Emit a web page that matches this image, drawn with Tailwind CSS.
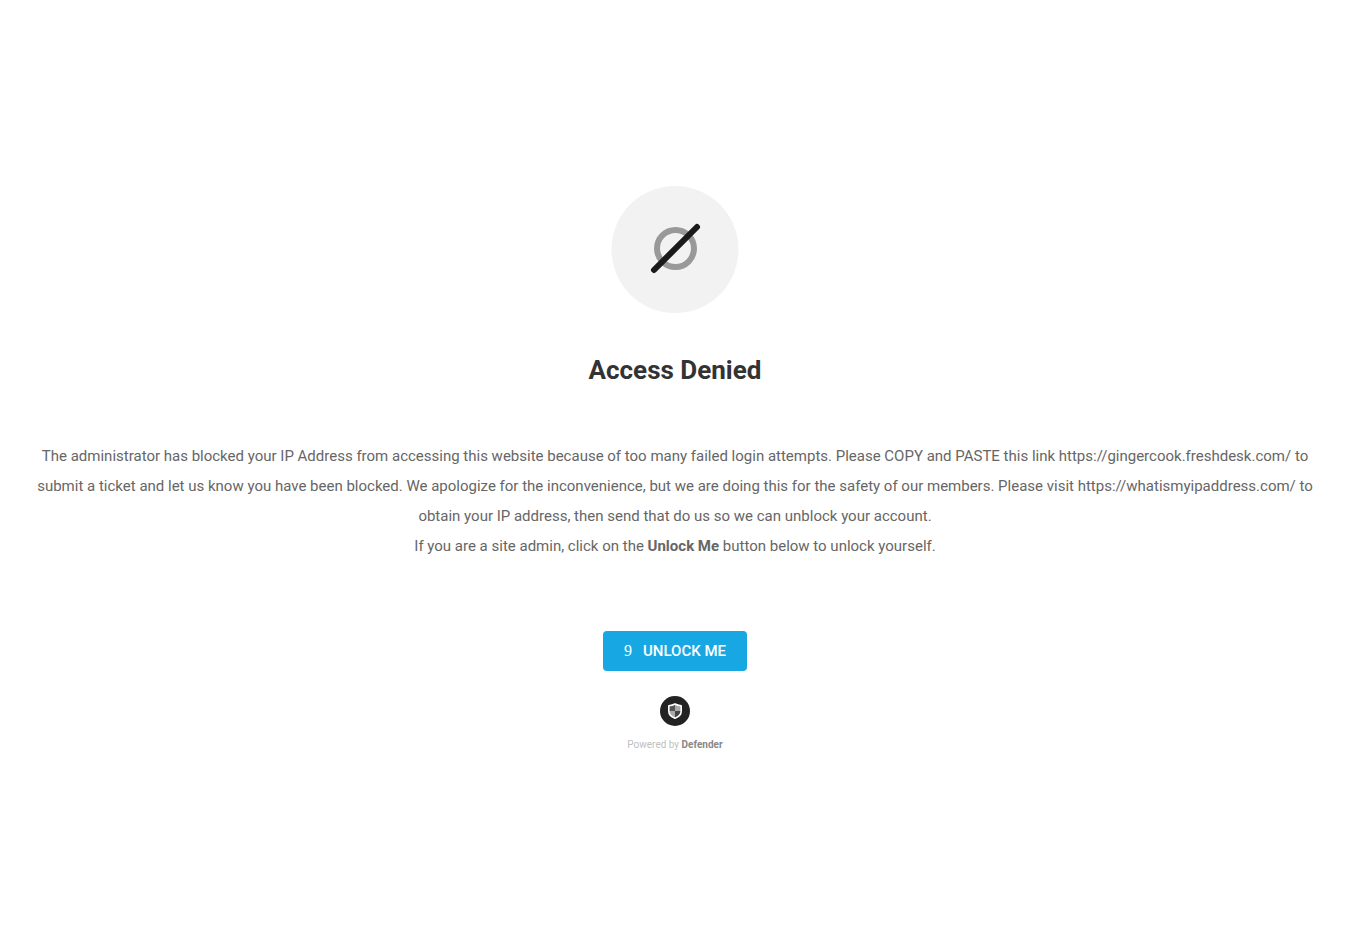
<!DOCTYPE html>
<html lang="en">
<head>
<meta charset="utf-8">
<meta name="viewport" content="width=device-width, initial-scale=1">
<title>Access Denied</title>
<script src="https://cdn.jsdelivr.net/npm/@tailwindcss/browser@4"></script>
</head>
<body class="min-h-screen bg-white font-['Roboto',sans-serif] text-[#666666]">
<main class="flex min-h-screen flex-col items-center justify-center px-[30px] pb-[3px] text-center">
  <svg class="size-32" viewBox="0 0 128 128" fill="none" aria-hidden="true">
    <circle cx="64" cy="63.500" r="63.500" fill="#f2f2f2"/>
    <circle cx="64.500" cy="62.500" r="18.500" stroke="#999999" stroke-width="6"/>
    <path d="M43 84L86 41" stroke="#1a1a1a" stroke-width="6" stroke-linecap="round"/>
  </svg>
  <h1 class="mt-10 text-[26px] leading-8 font-bold text-[#333333]">Access Denied</h1>
  <p class="mt-[55px] text-[15px] leading-[30px]">The administrator has blocked your IP Address from accessing this website because of too many failed login attempts. Please COPY and PASTE this link https://gingercook.freshdesk.com/ to submit a ticket and let us know you have been blocked. We apologize for the inconvenience, but we are doing this for the safety of our members. Please visit https://whatismyipaddress.com/ to obtain your IP address, then send that do us so we can unblock your account.</p>
  <p class="text-[15px] leading-[30px]">If you are a site admin, click on the <strong class="font-bold">Unlock Me</strong> button below to unlock yourself.</p>
  <button type="button" class="mt-[70px] flex h-10 items-center gap-[11px] rounded-[4px] bg-[#17a8e3] px-[21px] text-[15px] leading-5 font-medium text-white"><span class="font-['Liberation_Serif',serif] text-base leading-5 font-normal" aria-hidden="true">9</span>UNLOCK ME</button>
  <svg class="mt-[25px] size-[30px]" viewBox="0 0 30 30" fill="none" aria-hidden="true">
    <circle cx="15" cy="15" r="15" fill="#222222"/>
    <path d="M15 8V15H9V10Q12.500 10 15 8Z" fill="#555555"/>
    <path d="M15 8Q17.500 10 21 10V15H15Z" fill="#aaaaaa"/>
    <path d="M9 15H15V22Q9 20 9 15Z" fill="#aaaaaa"/>
    <path d="M15 15H21Q21 20 15 22Z" fill="#444444"/>
    <path d="M15 8Q17.500 9.500 21.200 9.700V15C21.200 18.700 18.500 21 15 22.300C11.500 21 8.800 18.700 8.800 15V9.700Q12.500 9.500 15 8Z" stroke="white" stroke-width="1.600" stroke-linejoin="round"/>
  </svg>
  <p class="mt-[11px] text-[10px] leading-[15px] text-[#c0c0c0]">Powered by <strong class="font-bold text-[#888888]">Defender</strong></p>
</main>
</body>
</html>
